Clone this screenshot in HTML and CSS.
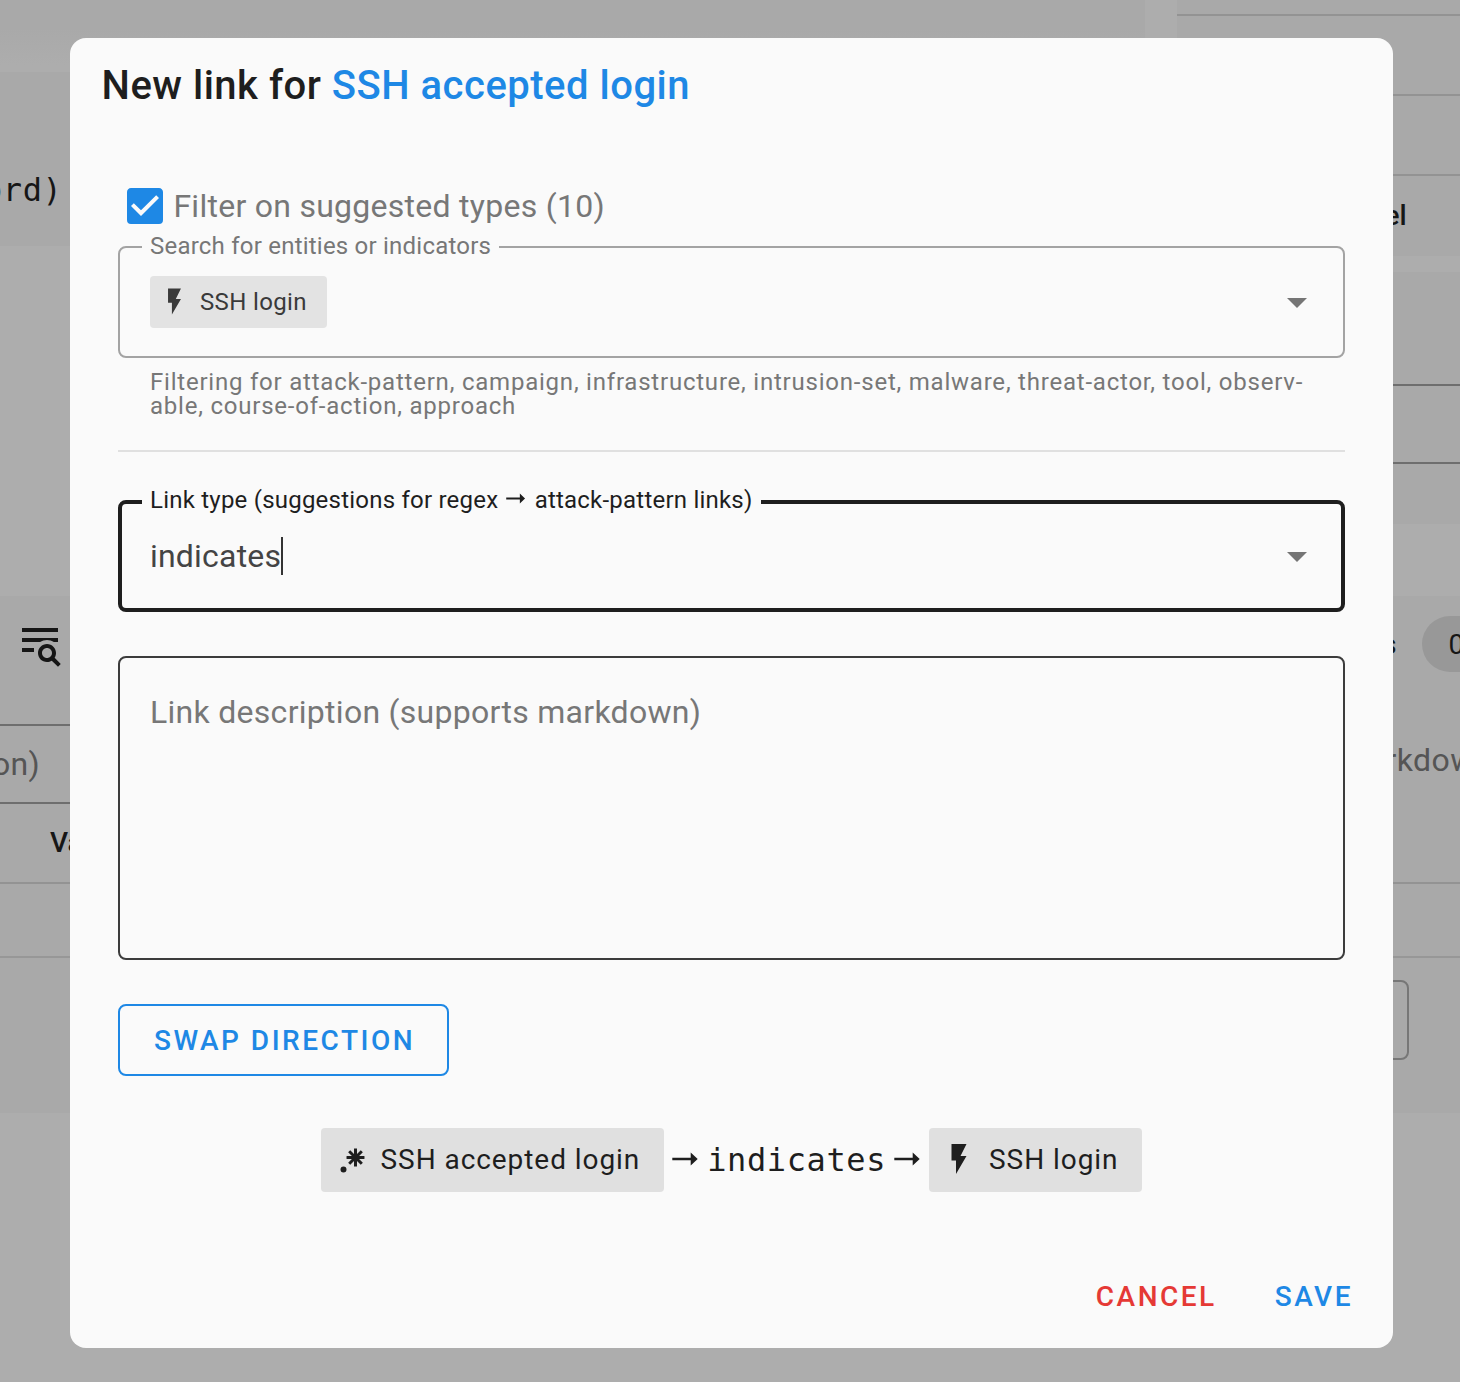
FILE: index.html
```html
<!DOCTYPE html>
<html lang="en">
<head>
<meta charset="utf-8">
<title>New link</title>
<link rel="stylesheet" href="styles.css">
</head>
<body>
<svg width="0" height="0" class="sprite">
  <symbol id="flash" viewBox="0 0 24 24"><path d="M7,2V13H10V22L17,10H13L17,2H7Z"/></symbol>
  <symbol id="down" viewBox="0 0 24 24"><path d="M7,10L12,15L17,10H7Z"/></symbol>
  <symbol id="right" viewBox="0 0 27 14"><path d="M.3 5.8H18.7V.4L25.7 7L18.7 13.6V8.2H.3Z"/></symbol>
</svg>
<div class="page">
  <div class="column">
    <div class="gap gap-top"></div>
    <section class="card code-card">ord)</section>
    <div class="gap gap-mid"></div>
    <section class="card table-card">
      <div class="toolbar"><svg class="icon48" viewBox="0 0 24 24"><path d="M19.31 18.9L22.39 22L21 23.39L17.88 20.32C17.19 20.75 16.37 21 15.5 21C13 21 11 19 11 16.5C11 14 13 12 15.5 12C18 12 20 14 20 16.5C20 17.38 19.75 18.21 19.31 18.9M15.5 19C16.88 19 18 17.88 18 16.5C18 15.12 16.88 14 15.5 14C14.12 14 13 15.12 13 16.5C13 17.88 14.12 19 15.5 19M21 4V6H3V4H21M3 16V14H9V16H3M3 11V9H21V11H18.97C17.96 10.37 16.77 10 15.5 10C14.23 10 13.04 10.37 12.03 11H3Z"/></svg></div>
      <div class="filter">on)</div>
      <div class="table-head">Value</div>
      <div class="table-row"></div>
    </section>
  </div>
  <div class="column">
    <section class="card list-card">
      <div class="line first"></div>
      <div class="line"></div>
      <div class="line"></div>
      <div class="level">el</div>
    </section>
    <section class="card input-card"><div class="input-box"></div></section>
    <section class="card notes-card">
      <div class="notes-head"><span>s</span><span class="count">0</span></div>
      <div class="notes-text">rkdown)</div>
      <div class="notes-row"></div>
      <div class="notes-button"></div>
    </section>
  </div>
</div>

<div class="dialog" role="dialog">
  <h1 class="title">New link for <span>SSH accepted login</span></h1>
  <div class="check">
    <svg class="icon48" viewBox="0 0 24 24"><path d="M10,17L5,12L6.41,10.58L10,14.17L17.59,6.58L19,8M19,3H5C3.89,3 3,3.89 3,5V19A2,2 0 0,0 5,21H19A2,2 0 0,0 21,19V5C21,3.89 20.1,3 19,3Z"/></svg>
    <span>Filter on suggested types (10)</span>
  </div>
  <div class="field">
    <span class="label">Search for entities or indicators</span>
    <span class="chip small"><svg><use href="#flash"/></svg>SSH login</span>
    <svg class="icon48 arrow"><use href="#down"/></svg>
  </div>
  <div class="hint">Filtering for attack-pattern, campaign, infrastructure, intrusion-set, malware, threat-actor, tool, observ-<br>able, course-of-action, approach</div>
  <hr class="divider">
  <div class="field focused">
    <span class="label">Link type (suggestions for regex <svg class="right inline" role="img" aria-label="→"><use href="#right"/></svg> attack-pattern links)</span>
    <span class="value">indicates</span><span class="caret"></span>
    <svg class="icon48 arrow"><use href="#down"/></svg>
  </div>
  <div class="area">Link description (supports markdown)</div>
  <button class="swap">SWAP DIRECTION</button>
  <div class="preview">
    <span class="chip"><svg viewBox="0 0 24 24"><path d="M16,16.92C15.67,16.97 15.34,17 15,17C14.66,17 14.33,16.97 14,16.92V13.41L11.5,15.89C11,15.5 10.5,15 10.11,14.5L12.59,12H9.08C9.03,11.67 9,11.34 9,11C9,10.66 9.03,10.33 9.08,10H12.59L10.11,7.5C10.3,7.25 10.5,7 10.76,6.76C11,6.5 11.25,6.3 11.5,6.11L14,8.59V5.08C14.33,5.03 14.66,5 15,5C15.34,5 15.67,5.03 16,5.08V8.59L18.5,6.11C19,6.5 19.5,7 19.89,7.5L17.41,10H20.92C20.97,10.33 21,10.66 21,11C21,11.34 20.97,11.67 20.92,12H17.41L19.89,14.5C19.7,14.75 19.5,15 19.24,15.24C19,15.5 18.75,15.7 18.5,15.89L16,13.41V16.92M5,19A2,2 0 0,1 7,17A2,2 0 0,1 9,19A2,2 0 0,1 7,21A2,2 0 0,1 5,19Z"/></svg>SSH accepted login</span>
    <svg class="right" role="img" aria-label="→"><use href="#right"/></svg>
    <code>indicates</code>
    <svg class="right" role="img" aria-label="→"><use href="#right"/></svg>
    <span class="chip"><svg><use href="#flash"/></svg>SSH login</span>
  </div>
  <div class="actions"><button class="cancel">CANCEL</button><button class="save">SAVE</button></div>
</div>
</body>
</html>
```
FILE: styles.css
```css
* { box-sizing: border-box; }
body {
  margin: 0;
  height: 1382px;
  overflow: hidden;
  background: #adadad;
  color: #161616;
  font-family: Roboto, sans-serif;
}
svg { fill: currentColor; flex: none; }
.sprite { position: absolute; }
.icon48 { width: 48px; height: 48px; }

/* Page behind the dialog */
.page { display: grid; grid-template-columns: 1145px 283px; gap: 32px; height: 1382px; }
.card { background: #a9a9a9; overflow: hidden; }
.gap-top { height: 72px; background: linear-gradient(#a9a9a9 40%, #adadad 90%); }
.code-card { height: 174px; padding-top: 98px; font: 32px/40px "DejaVu Sans Mono", monospace; letter-spacing: .6px; text-indent: -17px; }
.gap-mid { height: 350px; }
.table-card { height: 517px; }
.toolbar { height: 128px; padding: 24px 0 0 15.5px; }
.filter { height: 80px; border: solid #6e6e6e; border-width: 2px 0; font-size: 32px; line-height: 76px; letter-spacing: .3px; color: #555; text-indent: -8px; }
.table-head { height: 80px; padding: 1px 0 0 50px; border-bottom: 2px solid #939393; font-size: 28px; font-weight: 500; line-height: 76px; }
.table-row { height: 74px; border-bottom: 2px solid #979797; }
.list-card { height: 256px; margin-bottom: 16px; }
.line { height: 80px; border-bottom: 2px solid #939393; }
.line.first { height: 16px; }
.level { padding: 1px 0 0 207.5px; font-size: 28px; font-weight: 500; line-height: 78px; }
.input-card { height: 252px; margin-bottom: 72px; padding-top: 112px; }
.input-box { height: 80px; border: solid #6e6e6e; border-width: 2px 0; }
.notes-card { height: 517px; padding-top: 20px; }
.notes-head { display: flex; align-items: center; gap: 26px; padding-left: 205px; font-size: 28px; font-weight: 500; }
.count { flex: none; width: 100px; height: 56px; padding-left: 26px; border-radius: 28px; background: #989898; font-weight: 400; line-height: 57px; }
.notes-text { height: 212px; padding: 68px 0 0 208.5px; border-bottom: 2px solid #939393; font-size: 32px; line-height: 40px; letter-spacing: .4px; color: #555; }
.notes-row { height: 74px; border-bottom: 2px solid #979797; }
.notes-button { width: 232px; height: 80px; margin-top: 22px; border: 2px solid #777; border-radius: 8px; }

/* Dialog */
.dialog {
  position: absolute;
  left: 70px;
  top: 38px;
  width: 1323px;
  height: 1310px;
  padding: 16px 48px 0;
  border-radius: 16px;
  background: #fafafa;
  color: #1e1e1e;
}
.title { height: 64px; margin: 0 0 64px -16.5px; font-size: 40px; font-weight: 500; line-height: 64px; letter-spacing: .5px; }
.title span { color: #1e88e5; }
.check { display: flex; align-items: center; height: 48px; margin-left: 3.4px; gap: 4px; font-size: 32px; letter-spacing: .27px; color: #777; }
.check svg { color: #1e88e5; }
.field { position: relative; display: flex; align-items: center; height: 112px; margin-top: 16px; padding: 0 22.5px 0 30px; border: 2px solid #a3a3a3; border-radius: 8px; }
.label { position: absolute; left: 22px; top: -17px; padding: 0 8px; background: #fafafa; font-size: 24px; line-height: 30px; letter-spacing: .22px; color: #777; white-space: nowrap; }
.arrow { margin-left: auto; color: #757575; }
.chip { display: flex; align-items: center; height: 64px; padding: 0 24px 2px 12px; gap: 12px; border-radius: 4px; background: #e0e0e0; font-size: 28px; letter-spacing: .94px; white-space: nowrap; }
.chip svg { width: 36px; height: 36px; }
.chip.small { height: 52px; padding: 0 20px 0 9px; gap: 10px; background: #e3e3e3; color: #3a3a3a; font-size: 24px; letter-spacing: .36px; }
.chip.small svg { width: 31px; height: 31px; margin-bottom: 2px; }
.hint { margin: 12px 0 0 32px; font-size: 24px; line-height: 24px; letter-spacing: .78px; color: #777; white-space: nowrap; }
.divider { height: 2px; margin: 32px 0 48px; border: 0; background: #e0e0e0; }
.focused { margin-top: 0; padding: 0 20.5px 0 28px; border: 4px solid #1e1e1e; }
.focused .label { left: 20px; top: -19px; color: #1e1e1e; }
.value { font-size: 32px; letter-spacing: .2px; color: #444; }
.caret { width: 2px; height: 38px; background: #333; }
.area { height: 304px; margin-top: 44px; padding: 34px 30px; border: 2px solid #3c3c3c; border-radius: 8px; font-size: 32px; line-height: 40px; letter-spacing: .28px; color: #777; }
.right { width: 27px; height: 14px; margin-bottom: 2px; }
.right.inline { width: 20px; height: 11px; margin: 0 2px; vertical-align: 4px; }
button { border: 0; background: none; font: 500 28px/36px Roboto, sans-serif; letter-spacing: 2.5px; white-space: nowrap; padding: 0; }
.swap { display: block; width: 331px; height: 72px; margin-top: 44px; padding: 2px 0 0 2px; border: 2px solid #1e88e5; border-radius: 8px; color: #1e88e5; }
.preview { display: flex; align-items: center; justify-content: center; gap: 8px; height: 64px; margin-top: 52px; font-size: 28px; }
.preview code { font: 32px/40px "DejaVu Sans Mono", monospace; letter-spacing: .6px; }
.actions { display: flex; align-items: center; justify-content: flex-end; height: 72px; margin: 69px -8px 0 0; gap: 58px; }
.cancel { color: #e53935; }
.save { color: #1e88e5; }
```
